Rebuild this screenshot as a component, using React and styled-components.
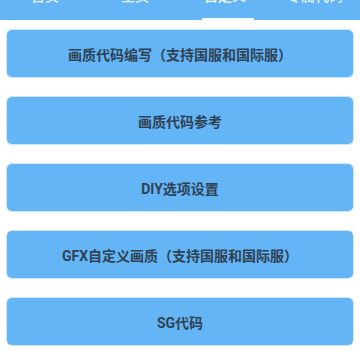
import React from 'react';
import styled, { createGlobalStyle } from 'styled-components';

const GlobalStyle = createGlobalStyle`
  html, body {
    margin: 0;
    padding: 0;
    background: #ffffff;
    font-family: Roboto, "Noto Sans CJK SC", sans-serif;
    overflow: hidden;
  }
`;

const Page = styled.div`
  width: 360px;
  height: 360px;
  overflow: hidden;
  background: #ffffff;
`;

const Scroller = styled.div`
  margin-top: -28px;
`;

const TabBar = styled.div`
  display: flex;
  height: 48px;
  background: #64b5f6;
`;

const Tab = styled.div`
  position: relative;
  flex: 1;
  display: flex;
  justify-content: center;
  align-items: flex-start;
  padding-top: 16px;
  box-sizing: border-box;
  color: #ffffff;
  font-size: 14px;
  font-weight: 500;
  line-height: 16px;
  opacity: ${(p) => (p.$active ? 1 : 0.85)};

  &::after {
    content: '';
    display: ${(p) => (p.$active ? 'block' : 'none')};
    position: absolute;
    bottom: 0;
    left: 22px;
    right: 16px;
    height: 2px;
    background: #ffffff;
  }
`;

const List = styled.div`
  display: flex;
  flex-direction: column;
  gap: 20px;
  padding: 10px 7px 0 7px;
`;

const Button = styled.div`
  height: 47px;
  display: flex;
  align-items: center;
  justify-content: center;
  background: #64b5f6;
  border-radius: 5px;
  box-shadow: 0 0 1px 1px rgba(100, 181, 246, 0.35);
  color: #2f4254;
  font-family: Roboto, "Noto Sans CJK SC", sans-serif;
  font-size: 14px;
  font-weight: 700;
`;

const tabs = ['首页', '全页', '自定义', '专属代码'];
const items = [
  '画质代码编写（支持国服和国际服）',
  '画质代码参考',
  'DIY选项设置',
  'GFX自定义画质（支持国服和国际服）',
  'SG代码',
];

export default function App() {
  return (
    <Page>
      <GlobalStyle />
      <Scroller>
        <TabBar>
          {tabs.map((t, i) => (
            <Tab key={t} $active={i === 2}>
              {t}
            </Tab>
          ))}
        </TabBar>
        <List>
          {items.map((label) => (
            <Button key={label}>{label}</Button>
          ))}
        </List>
      </Scroller>
    </Page>
  );
}
